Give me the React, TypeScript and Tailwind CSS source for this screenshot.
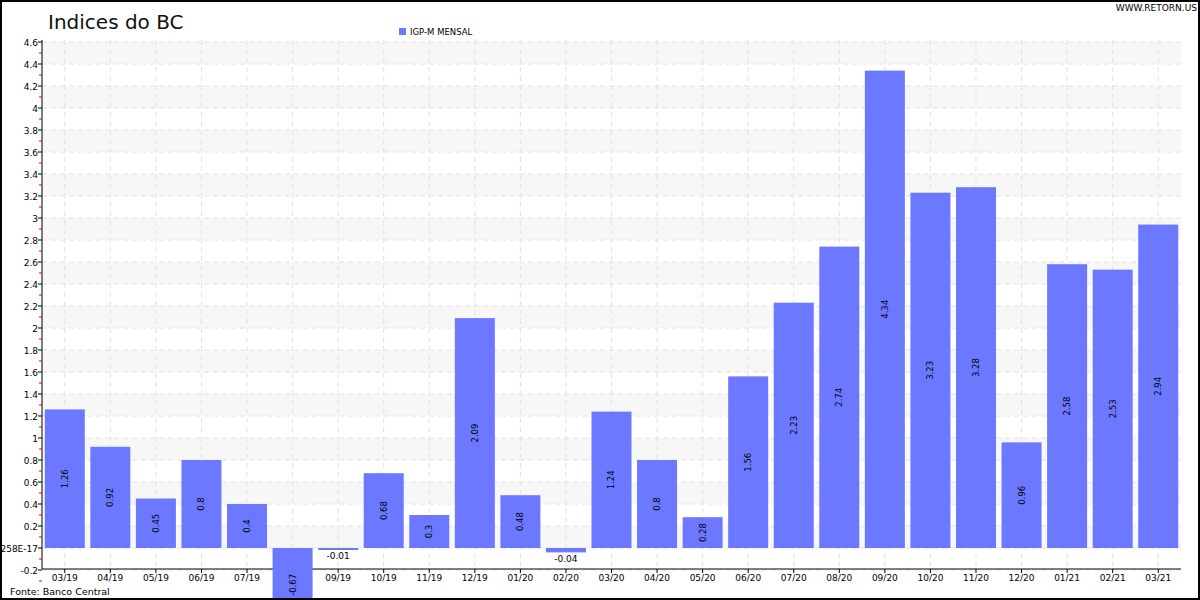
import React from "react";

const labels = ["03/19","04/19","05/19","06/19","07/19","08/19","09/19","10/19","11/19","12/19","01/20","02/20","03/20","04/20","05/20","06/20","07/20","08/20","09/20","10/20","11/20","12/20","01/21","02/21","03/21"];
const vals = [1.26,0.92,0.45,0.8,0.4,-0.67,-0.01,0.68,0.3,2.09,0.48,-0.04,1.24,0.8,0.28,1.56,2.23,2.74,4.34,3.23,3.28,0.96,2.58,2.53,2.94];
const X0 = 42, X1 = 1181, Y0 = 548, K = 110;
const y = (v: number) => Y0 - v * K;
const slot = (X1 - X0) / 25;
const cx = (i: number) => X0 + slot * (i + 0.5);
const font = "'DejaVu Sans', sans-serif";

export default function App() {
  const ticks: number[] = [];
  for (let i = -1; i <= 23; i++) ticks.push(Math.round(i * 2) / 10);
  const fmt = (v: number) => (v === 0 ? "-5.5511151231258E-17" : String(v));
  return (
    <div className="w-[1200px] h-[600px] bg-white border-2 border-black overflow-hidden">
      <svg width="1196" height="596" viewBox="2 2 1196 596" style={{ fontFamily: font }}>
        {ticks.slice(0, -1).map((t, i) =>
          i % 2 === 1 ? <rect key={t} x={X0} y={y(t + 0.2)} width={X1 - X0} height={22} fill="#f7f7f7" /> : null
        )}
        {ticks.map((t) => (
          <line key={"h" + t} x1={X0} x2={X1} y1={y(t)} y2={y(t)} stroke="#e2e2e2" strokeDasharray="5 4" />
        ))}
        {labels.map((_, i) => (
          <line key={"v" + i} x1={cx(i)} x2={cx(i)} y1={40} y2={569} stroke="#e2e2e2" strokeDasharray="5 4" />
        ))}
        <line x1={X0} x2={X0} y1={40} y2={569} stroke="#000" />
        <line x1={X0} x2={X1} y1={569} y2={569} stroke="#000" />
        {ticks.map((t) => (
          <g key={"t" + t}>
            <line x1={X0 - 4} x2={X0} y1={y(t)} y2={y(t)} stroke="#000" />
            <line x1={X0 - 3} x2={X0} y1={y(t) + 11} y2={y(t) + 11} stroke="#e00" />
            <text x={38} y={y(t) + 3.5} fontSize="9" textAnchor="end">{fmt(t)}</text>
          </g>
        ))}
        {labels.map((l, i) => (
          <g key={"x" + i}>
            <line x1={cx(i)} x2={cx(i)} y1={569} y2={573} stroke="#000" />
            <text x={cx(i)} y={581} fontSize="9" textAnchor="middle">{l}</text>
          </g>
        ))}
        {vals.map((v, i) => {
          const top = Math.min(y(v), Y0);
          const h = Math.max(Math.abs(v) * K, 2);
          return <rect key={"b" + i} x={cx(i) - 20} y={top} width={40} height={h} fill="#6c78ff" />;
        })}
        {vals.map((v, i) => {
          if (v < 0 && v > -0.1)
            return <text key={"l" + i} x={cx(i)} y={y(v) + 10} fontSize="9" textAnchor="middle">{v}</text>;
          const my = (y(v) + Y0) / 2;
          return (
            <text key={"l" + i} x={cx(i) + 3} y={my} fontSize="8.5" textAnchor="middle" transform={`rotate(-90 ${cx(i) + 3} ${my})`}>{v}</text>
          );
        })}
        <text x={48} y={29} fontSize="20" fill="#111">Indices do BC</text>
        <rect x={399} y={28} width={7} height={7} fill="#6c78ff" />
        <text x={410} y={35} fontSize="8.5">IGP-M MENSAL</text>
        <text x={1197} y={11} fontSize="9" textAnchor="end">WWW.RETORN.US</text>
        <text x={10} y={595} fontSize="9.5">Fonte: Banco Central</text>
      </svg>
    </div>
  );
}
